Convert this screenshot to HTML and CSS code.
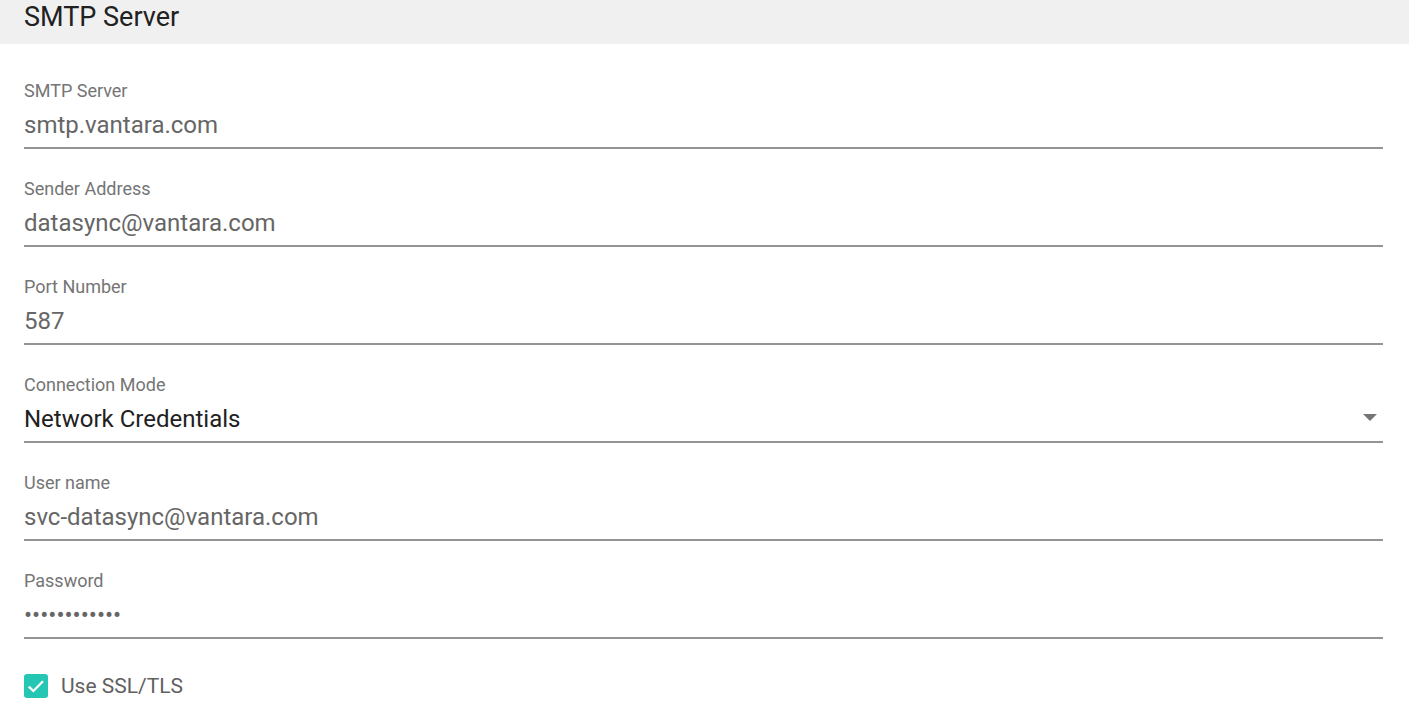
FILE: index.html
```html
<!DOCTYPE html>
<html lang="en">
<head>
<meta charset="utf-8">
<title>SMTP Server</title>
<link rel="stylesheet" href="styles.css">
</head>
<body>
<div class="page">
  <header class="section-header">
    <h1 class="section-title">SMTP Server</h1>
  </header>
  <form class="fields">
    <div class="field">
      <label class="field-label">SMTP Server</label>
      <div class="field-value">smtp.vantara.com</div>
    </div>
    <div class="field">
      <label class="field-label">Sender Address</label>
      <div class="field-value">datasync@vantara.com</div>
    </div>
    <div class="field">
      <label class="field-label">Port Number</label>
      <div class="field-value">587</div>
    </div>
    <div class="field">
      <label class="field-label">Connection Mode</label>
      <div class="field-value select-value">
        <span>Network Credentials</span>
        <svg class="select-arrow" width="14" height="7" viewBox="0 0 14 7"><path d="M0 0h14L7 7z" fill="#757575"/></svg>
      </div>
    </div>
    <div class="field">
      <label class="field-label">User name</label>
      <div class="field-value">svc-datasync@vantara.com</div>
    </div>
    <div class="field">
      <label class="field-label">Password</label>
      <div class="field-value password">••••••••••••</div>
    </div>
    <div class="checkbox-row">
      <span class="checkbox">
        <svg width="24" height="24" viewBox="0 0 24 24"><rect width="24" height="24" rx="3" fill="#26c6b4"/><path d="M4.8 12.6l4.6 4.4 9.6-9.8" fill="none" stroke="#fff" stroke-width="2.3"/></svg>
      </span>
      <span class="checkbox-label">Use SSL/TLS</span>
    </div>
  </form>
</div>
</body>
</html>
```
FILE: styles.css
```css
* { box-sizing: border-box; }
html, body {
  margin: 0;
  padding: 0;
  background: #ffffff;
  font-family: Roboto, "Liberation Sans", Arial, sans-serif;
}
.page {
  width: 1409px;
  height: 702px;
  overflow: hidden;
}
.section-header {
  height: 44px;
  background: #f0f0f0;
  padding: 1px 24px 0;
}
.section-title {
  margin: 0;
  font-size: 27px;
  font-weight: 400;
  color: #212121;
  line-height: 32px;
}
.fields {
  padding: 36px 26px 0 24px;
  display: flex;
  flex-direction: column;
  gap: 29px;
}
.field {
  display: flex;
  flex-direction: column;
}
.field-label {
  font-size: 18px;
  line-height: 22px;
  color: #757575;
}
.field-value {
  margin-top: 9px;
  font-size: 24px;
  line-height: 28px;
  color: #666666;
  padding-bottom: 8px;
  border-bottom: 2px solid #949494;
}
.select-value {
  display: flex;
  align-items: center;
  justify-content: space-between;
  color: #212121;
}
.select-arrow {
  margin-right: 6px;
  margin-bottom: 4px;
}
.checkbox-row {
  margin-top: 6px;
  display: flex;
  align-items: center;
  gap: 13px;
}
.checkbox {
  width: 24px;
  height: 24px;
  display: block;
}
.checkbox svg { display: block; }
.checkbox-label {
  font-size: 21px;
  line-height: 24px;
  color: #616161;
}
```
